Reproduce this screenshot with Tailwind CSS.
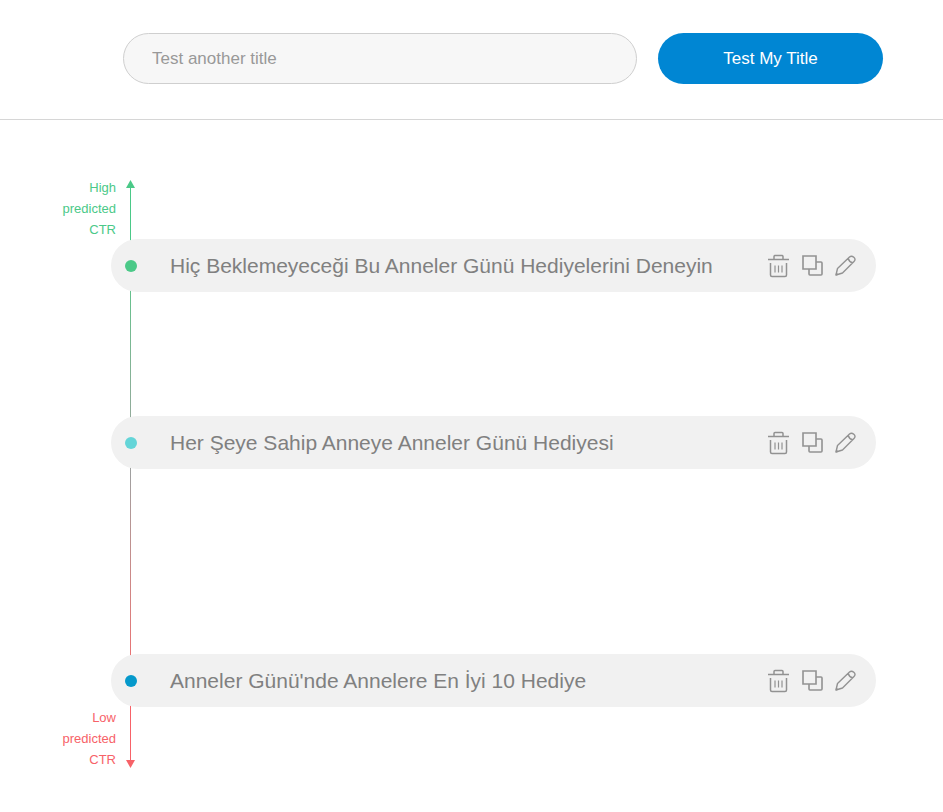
<!DOCTYPE html>
<html lang="en">
<head>
  <meta charset="UTF-8" />
  <title>Title Analyzer</title>
  <meta name="viewport" content="width=device-width, initial-scale=1.0" />
  <script src="https://cdn.jsdelivr.net/npm/@tailwindcss/browser@4"></script>
</head>
<body class="bg-white text-[#808080] font-['Liberation_Sans',Arial,sans-serif]">

<!-- Shared icons -->
<svg class="hidden">
  <symbol id="icon-trash" viewBox="0 0 22 24" fill="none" stroke="currentColor" stroke-width="1.5">
    <path d="M0 5.5h21M6 5.500V2.500q0-1 1-1h7q1 0 1 1v3M2.500 9v12q0 1.500 1.500 1.500h13q1.500 0 1.500-1.500V9" />
    <path d="M7 11.500v7M10.500 11.500v7M14 11.500v7" stroke-width="1.2" />
  </symbol>
  <symbol id="icon-copy" viewBox="0 0 21 21" fill="none" stroke="currentColor" stroke-width="1.6">
    <path d="M1 1h13v13H1zM14 7h5q1 0 1 1v11q0 1-1 1H8q-1 0-1-1v-5" />
  </symbol>
  <symbol id="icon-edit" viewBox="0 0 21 21" fill="none" stroke="currentColor" stroke-width="1.4" stroke-linejoin="round">
    <path d="M1 20l1.500-6.500L14.500 2q2-1.800 4.300 0.300t0.200 4.200L7.500 18zM13.200 3.500q1 3.500 4.500 4.300" />
    <path d="M1 20l2-0.500L1.500 18z" fill="currentColor" stroke-width="0.8" />
  </symbol>
</svg>

<!-- Title form -->
<header class="border-b border-[#d6d6d6]">
  <form class="flex gap-[21px] pt-[33px] pb-[35px] pl-[123px] pr-[60px]">
    <input type="text" aria-label="Title" placeholder="Test another title" class="flex-1 min-w-0 h-[51px] rounded-full border border-[#cfcfcf] bg-[#f7f7f7] px-7 text-[17px] placeholder:text-[#999999] outline-none" />
    <button type="button" class="w-[225px] h-[51px] rounded-full bg-[#0086d3] text-white text-[17px]">Test My Title</button>
  </form>
</header>

<!-- Results, best title first -->
<main class="relative mt-[57px] mb-10 pr-[67px]">
  <!-- Axis -->
  <div class="absolute left-[126px] top-[3px] bottom-[2px] w-[9px] flex flex-col items-center">
    <svg class="w-[9px] h-2 shrink-0" viewBox="0 0 9 8"><path d="M4.500 0L9 8H0z" fill="#4bc988" /></svg>
    <div class="w-px flex-1 bg-linear-to-b from-[#4bc988] from-10% via-[#a0a0a0] via-50% to-[#f76268] to-90%"></div>
    <svg class="w-[9px] h-2 shrink-0" viewBox="0 0 9 8"><path d="M4.500 8L9 0H0z" fill="#f76268" /></svg>
  </div>

  <p class="w-[116px] h-[62px] pl-12 text-right text-[13px] leading-[21px] text-[#4bc988]">High predicted CTR</p>

  <ul class="relative ml-[111px]">
    <li class="flex items-center h-[53px] mb-[124px] rounded-full bg-[#f1f1f1] pl-[14px] pr-5">
      <span class="size-3 shrink-0 rounded-full bg-[#4bc988]"></span>
      <span class="flex-1 ml-[33px] text-[21px] whitespace-nowrap">Hiç Beklemeyeceği Bu Anneler Günü Hediyelerini Deneyin</span>
      <span class="flex items-center gap-3 text-[#929292]">
        <button type="button" aria-label="Delete"><svg class="w-[22px] h-6"><use href="#icon-trash" /></svg></button>
        <button type="button" aria-label="Copy"><svg class="size-[21px]"><use href="#icon-copy" /></svg></button>
        <button type="button" aria-label="Edit"><svg class="size-[21px]"><use href="#icon-edit" /></svg></button>
      </span>
    </li>
    <li class="flex items-center h-[53px] mb-[185px] rounded-full bg-[#f1f1f1] pl-[14px] pr-5">
      <span class="size-3 shrink-0 rounded-full bg-[#64d5d8]"></span>
      <span class="flex-1 ml-[33px] text-[21px] whitespace-nowrap">Her Şeye Sahip Anneye Anneler Günü Hediyesi</span>
      <span class="flex items-center gap-3 text-[#929292]">
        <button type="button" aria-label="Delete"><svg class="w-[22px] h-6"><use href="#icon-trash" /></svg></button>
        <button type="button" aria-label="Copy"><svg class="size-[21px]"><use href="#icon-copy" /></svg></button>
        <button type="button" aria-label="Edit"><svg class="size-[21px]"><use href="#icon-edit" /></svg></button>
      </span>
    </li>
    <li class="flex items-center h-[53px] rounded-full bg-[#f1f1f1] pl-[14px] pr-5">
      <span class="size-3 shrink-0 rounded-full bg-[#0599cb]"></span>
      <span class="flex-1 ml-[33px] text-[21px] whitespace-nowrap">Anneler Günü'nde Annelere En İyi 10 Hediye</span>
      <span class="flex items-center gap-3 text-[#929292]">
        <button type="button" aria-label="Delete"><svg class="w-[22px] h-6"><use href="#icon-trash" /></svg></button>
        <button type="button" aria-label="Copy"><svg class="size-[21px]"><use href="#icon-copy" /></svg></button>
        <button type="button" aria-label="Edit"><svg class="size-[21px]"><use href="#icon-edit" /></svg></button>
      </span>
    </li>
  </ul>

  <p class="w-[116px] pl-12 text-right text-[13px] leading-[21px] text-[#f76268]">Low predicted CTR</p>
</main>

</body>
</html>
